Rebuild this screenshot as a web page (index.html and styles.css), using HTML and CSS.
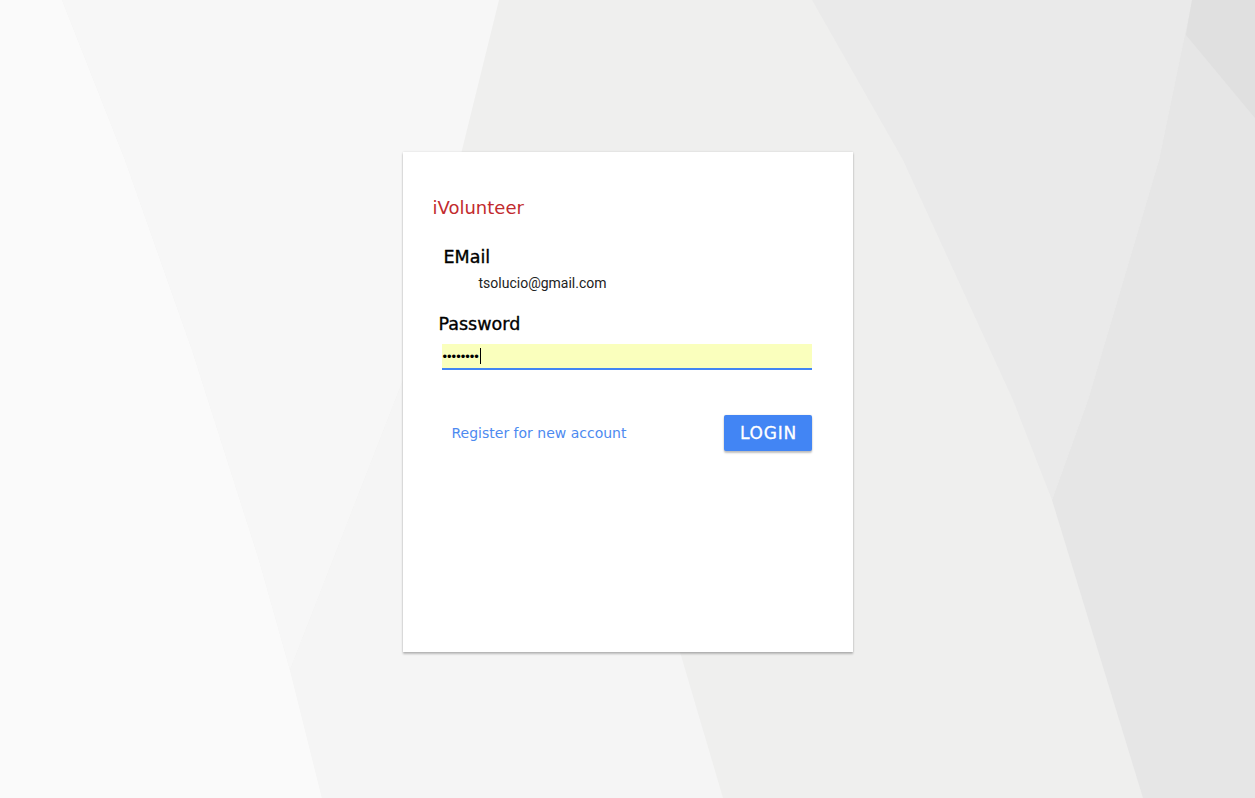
FILE: index.html
```html
<!DOCTYPE html>
<html lang="en">
<head>
<meta charset="utf-8">
<title>iVolunteer - Login</title>
<link rel="stylesheet" href="styles.css">
</head>
<body>
<svg class="backdrop" viewBox="0 0 1255 798" preserveAspectRatio="none" aria-hidden="true">
  <rect x="0" y="0" width="1255" height="798" fill="#efefee"/>
  <polygon fill="#f5f5f5" points="290,670 405,375 600,375 680,652 723,798 322,798"/>
  <polygon fill="#f7f7f7" points="62,0 499,0 462,150 405,375 290,670 259,560 192,350 125,160"/>
  <polygon fill="#fafafa" points="0,0 62,0 125,160 192,350 259,560 290,670 322,798 0,798"/>
  <polygon fill="#eaeaea" points="812,0 1192,0 1159,160 1088,400 1052,500 1013,400 903,160"/>
  <polygon fill="#e6e6e6" points="1192,0 1255,0 1255,798 1143,798 1052,500 1088,400 1159,160"/>
  <polygon fill="#e0e0e0" points="1192,0 1255,0 1255,118 1186,35"/>
</svg>
<main class="page">
  <section class="card">
    <h1 class="brand">iVolunteer</h1>
    <div class="field">
      <div class="label label-email">EMail</div>
      <div class="value">tsolucio@gmail.com</div>
    </div>
    <div class="field">
      <div class="label label-pass">Password</div>
      <div class="input"><span class="dots">••••••••</span><span class="caret"></span></div>
    </div>
    <div class="actions">
      <a class="register" href="#">Register for new account</a>
      <button class="login" type="button">LOGIN</button>
    </div>
  </section>
</main>
</body>
</html>
```
FILE: styles.css
```css
html, body {
  margin: 0;
  padding: 0;
}
body {
  width: 1255px;
  height: 798px;
  overflow: hidden;
  position: relative;
  background: #efefee;
  font-family: "DejaVu Sans", "Noto Sans", sans-serif;
}
.backdrop {
  position: absolute;
  left: 0;
  top: 0;
  width: 1255px;
  height: 798px;
  z-index: 0;
}
.page {
  position: relative;
  z-index: 1;
  display: flex;
  justify-content: center;
  padding-top: 152px;
}
.card {
  width: 450px;
  height: 500px;
  box-sizing: border-box;
  background: #ffffff;
  padding: 45px 41px 0 30px;
  box-shadow: 0 2px 2px rgba(0,0,0,0.24), 0 0 2px rgba(0,0,0,0.12);
  display: flex;
  flex-direction: column;
}
.brand {
  margin: 0;
  font-size: 18px;
  line-height: 22px;
  font-weight: normal;
  color: #c22a2e;
}
.field {
  display: flex;
  flex-direction: column;
}
.label {
  font-size: 17.5px;
  line-height: 22px;
  color: #000;
  -webkit-text-stroke: 0.35px #000;
}
.label-email {
  margin: 27px 0 0 11px;
}
.label-pass {
  margin: 21px 0 0 6px;
}
.value {
  margin: 6px 0 0 46px;
  font-family: Roboto, "Liberation Sans", sans-serif;
  font-size: 14px;
  line-height: 18px;
  color: #222;
}
.input {
  margin: 9px 0 0 9px;
  height: 24px;
  background: #faffbd;
  border-bottom: 2px solid #4285f4;
  display: flex;
  align-items: center;
  padding-left: 1px;
}
.dots {
  font-family: "Liberation Sans", sans-serif;
  font-size: 13px;
  letter-spacing: 0;
  color: #000;
}
.caret {
  width: 1px;
  height: 16px;
  background: #000;
  margin-left: 1px;
}
.actions {
  margin-top: 45px;
  display: flex;
  justify-content: space-between;
  align-items: center;
}
.register {
  margin-left: 19px;
  font-size: 14px;
  color: #4d8af0;
  text-decoration: none;
}
.login {
  width: 88px;
  height: 36px;
  border: none;
  border-radius: 2px;
  background: #4285f4;
  color: #fff;
  font-family: "DejaVu Sans", "Noto Sans", sans-serif;
  font-size: 17px;
  letter-spacing: 0.8px;
  -webkit-text-stroke: 0.3px #fff;
  box-shadow: 0 2px 2px rgba(0,0,0,0.24), 0 0 2px rgba(0,0,0,0.12);
  padding: 0 0 1px 2px;
}
```
